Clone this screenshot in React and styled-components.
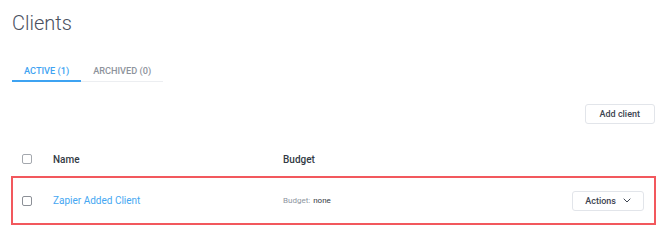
import React from "react";
import styled, { createGlobalStyle } from "styled-components";

const Global = createGlobalStyle`
  html, body { margin: 0; padding: 0; background: #fff; }
  body { font-family: Roboto, "Noto Sans", Arial, sans-serif; color: #333a45; }
`;

const Page = styled.div`
  padding: 13px 14px 0 11px;
  width: 670px;
  box-sizing: border-box;
`;

const Title = styled.h1`
  margin: 0 0 0 1px;
  font-size: 20px;
  line-height: 20px;
  font-weight: 300;
  color: #4a5060;
`;

const Tabs = styled.div`
  display: inline-flex;
  margin: 31px 0 0 1px;
  border-bottom: 1px solid #eceef1;
`;

const Tab = styled.div`
  padding: 0 ${(p) => p.$px}px 2px;
  font-size: 9.2px;
  line-height: 14px;
  font-weight: 500;
  white-space: nowrap;
  text-transform: uppercase;
  color: ${(p) => (p.$active ? "#3ea3f2" : "#8d939c")};
  border-bottom: 2px solid ${(p) => (p.$active ? "#3ea3f2" : "transparent")};
  margin-bottom: -1px;
`;

const Toolbar = styled.div`
  display: flex;
  justify-content: flex-end;
  margin-top: 22px;
  padding-right: 1px;
`;

const Button = styled.button`
  display: inline-flex;
  align-items: center;
  gap: 7px;
  height: 20px;
  padding: 0 ${(p) => p.$px}px;
  background: #fff;
  border: 1px solid #e2e5ea;
  border-radius: 3px;
  font-family: Roboto, Arial, sans-serif;
  font-size: 9px;
  font-weight: 500;
  color: #3d4451;
  cursor: pointer;
`;

const Row = styled.div`
  display: grid;
  grid-template-columns: 31px 230px 1fr auto;
  align-items: center;
  padding: 0 10px 0 9px;
  height: ${(p) => p.$h}px;
  border: 2px solid ${(p) => (p.$highlight ? "#f2585d" : "transparent")};
  box-sizing: border-box;
`;

const HeaderRow = styled(Row)`
  margin-top: 15px;
  padding-top: 3px;
`;

const Check = styled.span`
  display: block;
  width: 8px;
  height: 8px;
  border: 1px solid ${(p) => (p.$dark ? "#8c9097" : "#a4a8ae")};
  border-radius: 2px;
  background: #fff;
`;

const HeadCell = styled.div`
  font-size: 10px;
  font-weight: 500;
  color: #333a45;
`;

const NameLink = styled.a`
  font-size: 10px;
  color: #45a7f2;
  text-decoration: none;
`;

const Budget = styled.div`
  font-size: 8px;
  color: #333a45;
  span { color: #8e95a0; margin-right: 3px; }
`;

const Chevron = () => (
  <svg width="8" height="5" viewBox="0 0 8 5" fill="none">
    <path d="M0.7 0.7l3.3 3.3L7.3 0.7" stroke="#3d4451" strokeWidth="1" />
  </svg>
);

export default function App() {
  return (
    <>
      <Global />
      <Page>
        <Title>Clients</Title>
        <Tabs>
          <Tab $active $px={12}>Active (1)</Tab>
          <Tab $px={12}>Archived (0)</Tab>
        </Tabs>
        <Toolbar>
          <Button $px={14}>Add client</Button>
        </Toolbar>
        <HeaderRow $h={37}>
          <Check />
          <HeadCell>Name</HeadCell>
          <HeadCell>Budget</HeadCell>
          <div />
        </HeaderRow>
        <Row $highlight $h={49}>
          <Check $dark />
          <NameLink href="#">Zapier Added Client</NameLink>
          <Budget>
            <span>Budget:</span>none
          </Budget>
          <Button $px={12}>
            Actions <Chevron />
          </Button>
        </Row>
      </Page>
    </>
  );
}
